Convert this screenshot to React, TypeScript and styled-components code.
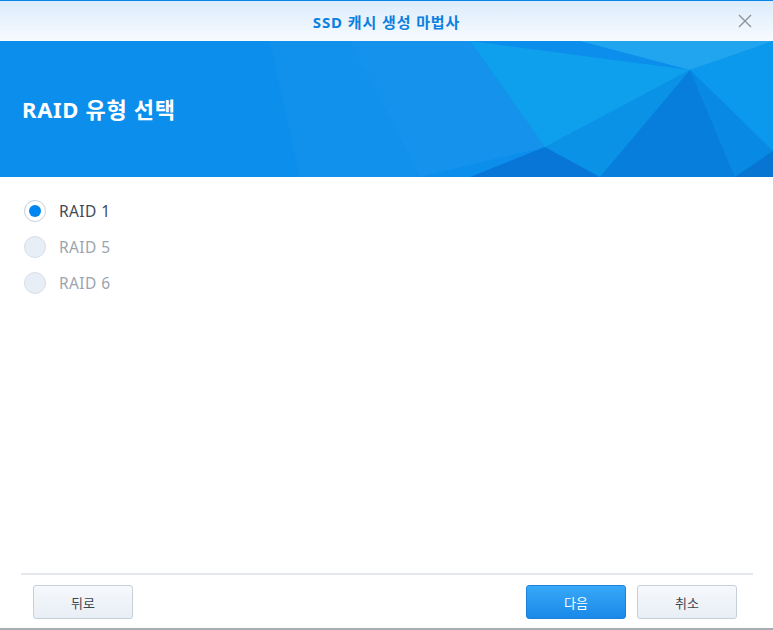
import React from "react";
import styled, { createGlobalStyle } from "styled-components";

const Global = createGlobalStyle`
  html, body { margin: 0; padding: 0; background: #ffffff; }
  body { font-family: "Noto Sans", "Noto Sans CJK KR", sans-serif; }
  * { box-sizing: border-box; }
`;

const Window = styled.div`
  width: 773px;
  height: 630px;
  display: flex;
  flex-direction: column;
  background: #ffffff;
  border-top: 1px solid #0a86e6;
  border-bottom: 2px solid #a9adb2;
  overflow: hidden;
`;

const TitleBar = styled.div`
  height: 40px;
  flex: none;
  display: flex;
  align-items: center;
  justify-content: center;
  position: relative;
  background: linear-gradient(#dcecfb, #f7fbff);
`;

const Title = styled.div`
  font-family: "Noto Sans", "Noto Sans CJK KR", sans-serif;
  font-size: 15px;
  font-weight: 700;
  color: #0a80e0;
  letter-spacing: 0.9px;
`;

const CloseButton = styled.button`
  position: absolute;
  right: 20px;
  top: 12px;
  width: 16px;
  height: 16px;
  padding: 0;
  border: none;
  background: transparent;
  display: flex;
  align-items: center;
  justify-content: center;
`;

const Banner = styled.div`
  height: 136px;
  flex: none;
  position: relative;
  background: #0b8eec;
  display: flex;
  align-items: center;
  padding-left: 22px;
  overflow: hidden;
`;

const BannerArt = styled.svg`
  position: absolute;
  left: 0;
  top: 0;
`;

const BannerTitle = styled.h1`
  position: relative;
  margin: 0 0 2px;
  font-family: "Noto Sans", "Noto Sans CJK KR", sans-serif;
  font-size: 22px;
  font-weight: 700;
  letter-spacing: 0.7px;
  color: #ffffff;
`;

const Body = styled.div`
  flex: 1;
  padding: 22px 24px 0;
  display: flex;
  flex-direction: column;
  gap: 12px;
`;

const Option = styled.label<{ $disabled?: boolean }>`
  display: flex;
  align-items: center;
  gap: 13px;
  height: 24px;
  font-family: "Noto Sans", "Noto Sans CJK KR", sans-serif;
  font-size: 15.5px;
  letter-spacing: 0.4px;
  color: ${(p) => (p.$disabled ? "#9ba5af" : "#414b55")};
`;

const Radio = styled.span<{ $checked?: boolean; $disabled?: boolean }>`
  width: 22px;
  height: 22px;
  border-radius: 50%;
  border: 1px solid ${(p) => (p.$disabled ? "#d6dee8" : "#c6d1dd")};
  background: ${(p) => (p.$disabled ? "#e8eef5" : "#ffffff")};
  display: flex;
  align-items: center;
  justify-content: center;
  &::after {
    content: "";
    display: ${(p) => (p.$checked ? "block" : "none")};
    width: 12px;
    height: 12px;
    border-radius: 50%;
    background: #0086f0;
  }
`;

const Footer = styled.div`
  flex: none;
  margin: 0 20px 0 21px;
  border-top: 2px solid #e4e7eb;
  padding: 10px 16px 9px 12px;
  display: flex;
  align-items: center;
  gap: 11px;
`;

const Spacer = styled.div`
  flex: 1;
`;

const Button = styled.button<{ $primary?: boolean }>`
  width: 100px;
  height: 34px;
  border-radius: 3px;
  font-family: "Noto Sans", "Noto Sans CJK KR", sans-serif;
  font-size: 13px;
  cursor: pointer;
  border: 1px solid ${(p) => (p.$primary ? "#1b82d9" : "#c6cfda")};
  color: ${(p) => (p.$primary ? "#ffffff" : "#3c4650")};
  background: ${(p) =>
    p.$primary
      ? "linear-gradient(#38a8f8, #1a89e8)"
      : "linear-gradient(#f6f9fc, #e8eef5)"};
`;

export default function App() {
  return (
    <>
      <Global />
      <Window>
        <TitleBar>
          <Title>SSD 캐시 생성 마법사</Title>
          <CloseButton aria-label="close">
            <svg width="14" height="14" viewBox="0 0 14 14">
              <path d="M1 1 L13 13 M13 1 L1 13" stroke="#8c9298" strokeWidth="1.4" fill="none" />
            </svg>
          </CloseButton>
        </TitleBar>
        <Banner>
          <BannerArt width="773" height="136" viewBox="0 0 773 136">
            <polygon points="270,0 350,0 420,136 300,136" fill="#ffffff" opacity="0.03" />
            <polygon points="350,0 470,0 545,106 420,136" fill="#ffffff" opacity="0.04" />
            <polygon points="470,0 690,29 545,106" fill="#12b6f0" opacity="0.45" />
            <polygon points="580,0 773,0 690,29" fill="#3ec0f4" opacity="0.45" />
            <polygon points="690,29 773,0 773,110" fill="#0aa0ec" opacity="0.6" />
            <polygon points="545,106 470,136 600,136" fill="#0666c8" opacity="0.6" />
            <polygon points="545,106 690,29 600,136" fill="#0a95e2" opacity="0.5" />
            <polygon points="690,29 735,136 600,136" fill="#0671cf" opacity="0.55" />
            <polygon points="690,29 773,110 773,136 735,136" fill="#0885dc" opacity="0.55" />
            <polygon points="735,136 773,110 773,136" fill="#0562c0" opacity="0.5" />
          </BannerArt>
          <BannerTitle>RAID 유형 선택</BannerTitle>
        </Banner>
        <Body>
          <Option>
            <Radio $checked />
            RAID 1
          </Option>
          <Option $disabled>
            <Radio $disabled />
            RAID 5
          </Option>
          <Option $disabled>
            <Radio $disabled />
            RAID 6
          </Option>
        </Body>
        <Footer>
          <Button>뒤로</Button>
          <Spacer />
          <Button $primary>다음</Button>
          <Button>취소</Button>
        </Footer>
      </Window>
    </>
  );
}
